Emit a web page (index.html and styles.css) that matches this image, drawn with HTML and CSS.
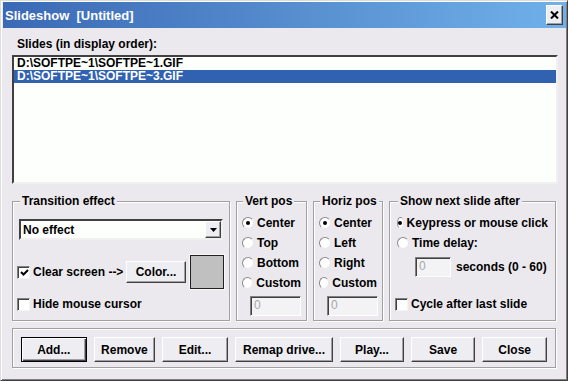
FILE: index.html
```html
<!DOCTYPE html>
<html lang="en">
<head>
  <meta charset="UTF-8">
  <title>Slideshow [Untitled]</title>
  <link rel="stylesheet" href="styles.css">
</head>
<body>
  <div class="window">
    <div class="titlebar">
      <span class="title">Slideshow&nbsp; [Untitled]</span>
      <span class="close-btn">
        <svg width="9" height="8" viewBox="0 0 9 8"><path d="M1 0.5 L8 7.5 M8 0.5 L1 7.5" stroke="#000" stroke-width="2"/></svg>
      </span>
    </div>

    <div class="dialog">
      <div class="caption">Slides (in display order):</div>
      <ul class="slide-list">
        <li>D:\SOFTPE~1\SOFTPE~1.GIF</li>
        <li class="selected">D:\SOFTPE~1\SOFTPE~3.GIF</li>
      </ul>

      <div class="options">
        <fieldset class="group transition">
          <legend>Transition effect</legend>
          <div class="select">
            <span>No effect</span>
            <span class="select-arrow">
              <svg width="7" height="4" viewBox="0 0 7 4"><path d="M0 0 H7 L3.5 4 Z" fill="#000"/></svg>
            </span>
          </div>
          <div class="color-row">
            <span class="check-label">
              <span class="check">
                <svg width="9" height="9" viewBox="0 0 9 9"><path d="M1 4 L3.5 6.5 L8 2" fill="none" stroke="#000" stroke-width="2"/></svg>
              </span>
              Clear screen --&gt;
            </span>
            <span class="btn color-btn">Color...</span>
            <span class="swatch"></span>
          </div>
          <div class="check-label hide-row">
            <span class="check"></span>
            Hide mouse cursor
          </div>
        </fieldset>

        <fieldset class="group pos vert">
          <legend>Vert pos</legend>
          <div class="radio-list">
            <div class="opt"><span class="radio on"></span>Center</div>
            <div class="opt"><span class="radio"></span>Top</div>
            <div class="opt"><span class="radio"></span>Bottom</div>
            <div class="opt"><span class="radio"></span>Custom</div>
          </div>
          <div class="num">0</div>
        </fieldset>

        <fieldset class="group pos horiz">
          <legend>Horiz pos</legend>
          <div class="radio-list">
            <div class="opt"><span class="radio on"></span>Center</div>
            <div class="opt"><span class="radio"></span>Left</div>
            <div class="opt"><span class="radio"></span>Right</div>
            <div class="opt"><span class="radio"></span>Custom</div>
          </div>
          <div class="num">0</div>
        </fieldset>

        <fieldset class="group next">
          <legend>Show next slide after</legend>
          <div class="radio-list">
            <div class="opt"><span class="radio on"></span>Keypress or mouse click</div>
            <div class="opt"><span class="radio"></span>Time delay:</div>
          </div>
          <div class="delay-row">
            <div class="num short">0</div>
            <span>seconds (0 - 60)</span>
          </div>
          <div class="check-label cycle-row">
            <span class="check"></span>
            Cycle after last slide
          </div>
        </fieldset>
      </div>

      <fieldset class="group actions">
        <span class="btn default w-add">Add...</span>
        <span class="btn w-remove">Remove</span>
        <span class="btn w-edit">Edit...</span>
        <span class="btn w-remap">Remap drive...</span>
        <span class="btn w-play">Play...</span>
        <span class="btn w-save">Save</span>
        <span class="btn w-close">Close</span>
      </fieldset>
    </div>
  </div>
</body>
</html>
```

FILE: styles.css
```css
body {
  margin: 0;
  font-family: 'Liberation Sans', Arial, sans-serif;
  font-size: 12px;
  font-weight: bold;
  color: #000;
  background-color: #ece9ee;
}
.window {
  width: 568px;
  height: 381px;
  box-sizing: border-box;
  border: 1px solid;
  border-color: #dcdcdc #404040 #404040 #dcdcdc;
  box-shadow: inset 1px 1px #fff, inset -1px -1px #808080;
  padding: 1px 1px 2px 2px;
  background-color: #ece9ee;
}
.titlebar {
  height: 26px;
  display: flex;
  align-items: center;
  justify-content: space-between;
  padding: 0 3px 0 2px;
  background: linear-gradient(to right, #3a69b5, #5890d0 55%, #70b1ea);
  color: white;
}
.title {
  font-size: 13px;
  white-space: nowrap;
}
.close-btn {
  width: 17px;
  height: 20px;
  box-sizing: border-box;
  display: flex;
  align-items: center;
  justify-content: center;
  background-color: #eeedf1;
  border: 1px solid;
  border-color: #fff #404040 #404040 #fff;
  box-shadow: inset -1px -1px #a0a0a0;
}
.dialog {
  padding: 8px 8px 0 9px;
}
.caption {
  line-height: 16px;
  padding-left: 5px;
  margin-bottom: 3px;
}
.slide-list {
  list-style: none;
  margin: 0;
  padding: 0;
  height: 129px;
  box-sizing: border-box;
  border: 2px solid;
  border-color: #404040 #f0f0f0 #f0f0f0 #404040;
  background-color: #fcfffc;
}
.slide-list li {
  line-height: 13px;
  height: 13px;
  padding-left: 3px;
}
.slide-list li.selected {
  background-color: #3161b1;
  color: white;
}
.options {
  display: flex;
  gap: 6px;
  height: 127px;
  margin: 10px 2px 0 0;
}
.group {
  margin: 0;
  padding: 0 6px;
  min-width: 0;
  box-sizing: border-box;
  border: 1px solid #a0a0a0;
  box-shadow: inset 1px 1px #fff, 1px 1px #fff;
}
.group legend {
  padding: 0 2px;
  margin-left: 1px;
  line-height: 14px;
  background-color: #ece9ee;
  white-space: nowrap;
}
.transition {
  width: 218px;
}
.pos {
  padding: 0 5px;
}
.vert {
  width: 71px;
}
.horiz {
  width: 70px;
}
.next {
  flex: 1;
  padding: 0 7px;
}
.select {
  margin-top: 11px;
  height: 21px;
  box-sizing: border-box;
  display: flex;
  align-items: center;
  padding-left: 2px;
  border: 2px solid;
  border-color: #404040 #f0f0f0 #f0f0f0 #404040;
  background-color: #fcfffc;
}
.select-arrow {
  margin-left: auto;
  width: 16px;
  height: 17px;
  box-sizing: border-box;
  display: flex;
  align-items: center;
  justify-content: center;
  background-color: #eeedf1;
  border: 1px solid;
  border-color: #fff #404040 #404040 #fff;
  box-shadow: inset -1px -1px #a0a0a0;
}
.color-row {
  display: flex;
  align-items: center;
  height: 34px;
  margin-top: 15px;
}
.check-label {
  display: flex;
  align-items: center;
  gap: 3px;
  margin-left: -2px;
  white-space: nowrap;
}
.check {
  width: 13px;
  height: 13px;
  box-sizing: border-box;
  display: flex;
  align-items: center;
  justify-content: center;
  background-color: white;
  border: 1px solid;
  border-color: #808080 #f4f4f4 #f4f4f4 #808080;
  box-shadow: inset 1px 1px #404040;
}
.check svg {
  margin: 1px 0 0 1px;
}
.btn {
  height: 25px;
  box-sizing: border-box;
  display: flex;
  align-items: center;
  justify-content: center;
  background-color: #eeedf1;
  border: 1px solid;
  border-color: #fff #404040 #404040 #fff;
  box-shadow: inset -1px -1px #a0a0a0;
  white-space: nowrap;
}
.btn.default {
  border-color: #000;
  box-shadow: inset 1px 1px #fff, inset -1px -1px #404040, inset -2px -2px #a0a0a0;
}
.color-btn {
  margin-left: auto;
  width: 60px;
  height: 22px;
}
.swatch {
  width: 34px;
  height: 34px;
  box-sizing: border-box;
  margin: 0 -1px 0 4px;
  border: 1px solid #222;
  box-shadow: 0 0 0 1px #f8f8f8;
  background-color: #c0c0c0;
}
.hide-row {
  height: 16px;
  margin-top: 7px;
}
.radio-list {
  margin-top: 5px;
}
.opt {
  height: 20px;
  display: flex;
  align-items: center;
  gap: 3px;
  white-space: nowrap;
}
.radio {
  width: 12px;
  height: 12px;
  box-sizing: border-box;
  border-radius: 50%;
  border: 1px solid;
  border-color: #8a8a8a #e8e8e8 #e8e8e8 #8a8a8a;
  background-color: white;
  display: flex;
  align-items: center;
  justify-content: center;
}
.radio.on::after {
  content: '';
  width: 4px;
  height: 4px;
  border-radius: 50%;
  background-color: #000;
}
.num {
  width: 51px;
  height: 20px;
  box-sizing: border-box;
  margin: 3px 0 0 8px;
  padding-left: 3px;
  line-height: 17px;
  font-weight: normal;
  color: #a8a8a8;
  background-color: #f3f2f5;
  border: 1px solid;
  border-color: #808080 #fff #fff #808080;
  box-shadow: inset 1px 1px #404040;
}
.delay-row {
  display: flex;
  align-items: center;
  gap: 5px;
  margin-top: 4px;
  padding-left: 18px;
  white-space: nowrap;
}
.num.short {
  width: 36px;
  margin: 0;
}
.cycle-row {
  height: 16px;
  margin-top: 19px;
}
.actions {
  display: flex;
  gap: 7px;
  margin: 7px 2px 0 0;
  padding: 8px 8px 5px;
}
.w-add { width: 66px; }
.w-remove { width: 62px; }
.w-edit { width: 66px; }
.w-remap { width: 99px; }
.w-play { width: 64px; }
.w-save { width: 65px; }
.w-close { width: 65px; }
```
